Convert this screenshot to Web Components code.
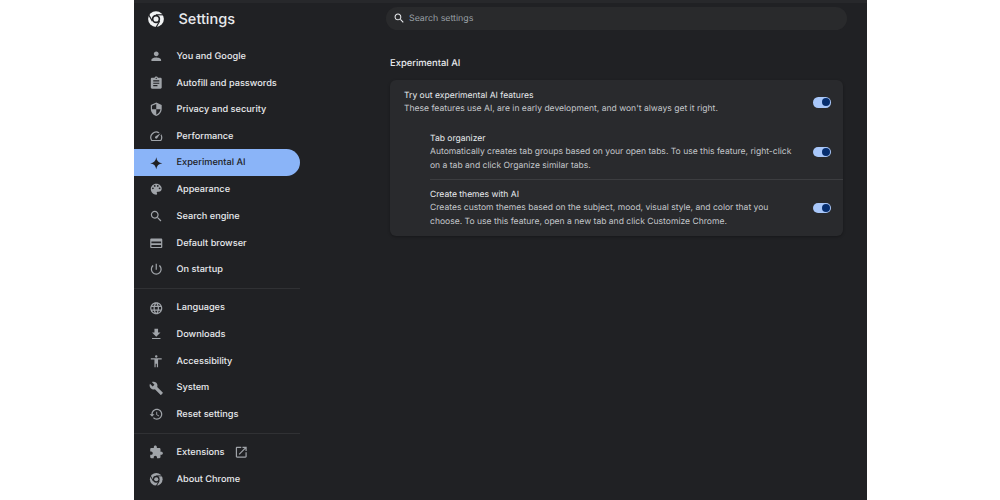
<!DOCTYPE html>
<html lang="en">
<head>
<meta charset="utf-8">
<title>Settings - Experimental AI</title>
<style>
    html, body {
        margin: 0;
        height: 100%;
        background: #fff;
        font-family: Inter, "Liberation Sans", sans-serif;
        text-rendering: geometricPrecision;
    }
</style>
</head>
<body>
<settings-app>
    <settings-sidebar slot="side">
        <nav-item icon="person">You and Google</nav-item>
        <nav-item icon="assignment">Autofill and passwords</nav-item>
        <nav-item icon="shield">Privacy and security</nav-item>
        <nav-item icon="speed">Performance</nav-item>
        <nav-item icon="spark" active>Experimental AI</nav-item>
        <nav-item icon="palette">Appearance</nav-item>
        <nav-item icon="search">Search engine</nav-item>
        <nav-item icon="browser">Default browser</nav-item>
        <nav-item icon="power">On startup</nav-item>
        <nav-rule></nav-rule>
        <nav-item icon="globe">Languages</nav-item>
        <nav-item icon="download">Downloads</nav-item>
        <nav-item icon="accessibility">Accessibility</nav-item>
        <nav-item icon="build">System</nav-item>
        <nav-item icon="restore">Reset settings</nav-item>
        <nav-rule></nav-rule>
        <nav-item icon="extension" external>Extensions</nav-item>
        <nav-item icon="chrome">About Chrome</nav-item>
    </settings-sidebar>
    <search-box slot="search">Search settings</search-box>
    <settings-section slot="main" heading="Experimental AI">
        <setting-row heading="Try out experimental AI features">These features use AI, are in early development, and won't always get it right.</setting-row>
        <setting-row sub heading="Tab organizer">Automatically creates tab groups based on your open tabs. To use this feature, right-click on a tab and click Organize similar tabs.</setting-row>
        <setting-row sub ruled heading="Create themes with AI">Creates custom themes based on the subject, mood, visual style, and color that you choose. To use this feature, open a new tab and click Customize Chrome.</setting-row>
    </settings-section>
</settings-app>

<script>
const ICONS = {
    person: "M12 12c2.21 0 4-1.79 4-4s-1.79-4-4-4-4 1.79-4 4 1.79 4 4 4zm0 2c-2.67 0-8 1.34-8 4v2h16v-2c0-2.66-5.33-4-8-4z",
    assignment: "M19 3h-4.18C14.4 1.84 13.3 1 12 1c-1.3 0-2.4.84-2.82 2H5c-1.1 0-2 .9-2 2v14c0 1.1.9 2 2 2h14c1.1 0 2-.9 2-2V5c0-1.1-.9-2-2-2zm-7 0c.55 0 1 .45 1 1s-.45 1-1 1-1-.45-1-1 .45-1 1-1zm2 14H7v-2h7v2zm3-4H7v-2h10v2zm0-4H7V7h10v2z",
    shield: "M12 1L3 5v6c0 5.55 3.84 10.74 9 12 5.16-1.26 9-6.45 9-12V5l-9-4zm0 10.99h7c-.53 4.12-3.28 7.79-7 8.94V12H5V6.3l7-3.11v8.8z",
    speed: "M20.38 8.57l-1.23 1.85a8 8 0 0 1-.22 7.58H5.07A8 8 0 0 1 15.58 6.85l1.85-1.23A10 10 0 0 0 3.35 19a2 2 0 0 0 1.72 1h13.85a2 2 0 0 0 1.74-1 10 10 0 0 0-.27-10.44zm-9.79 6.84a2 2 0 0 0 2.83 0l5.66-8.49-8.49 5.66a2 2 0 0 0 0 2.83z",
    spark: "M12 2C12.8 8 16 11.2 22 12C16 12.8 12.8 16 12 22C11.2 16 8 12.8 2 12C8 11.2 11.2 8 12 2z",
    palette: "M12 3c-4.97 0-9 4.03-9 9s4.03 9 9 9c.83 0 1.5-.67 1.5-1.5 0-.39-.15-.74-.39-1.01-.23-.26-.38-.61-.38-.99 0-.83.67-1.5 1.5-1.5H16c2.76 0 5-2.24 5-5 0-4.42-4.03-8-9-8zm-5.5 9c-.83 0-1.5-.67-1.5-1.5S5.67 9 6.5 9 8 9.67 8 10.5 7.33 12 6.5 12zm3-4C8.67 8 8 7.33 8 6.5S8.67 5 9.5 5s1.5.67 1.5 1.5S10.33 8 9.5 8zm5 0c-.83 0-1.5-.67-1.5-1.5S13.67 5 14.5 5s1.5.67 1.5 1.5S15.33 8 14.5 8zm3 4c-.83 0-1.5-.67-1.5-1.5S16.67 9 17.5 9s1.5.67 1.5 1.5-.67 1.5-1.5 1.5z",
    search: "M15.5 14h-.79l-.28-.27C15.41 12.59 16 11.11 16 9.5 16 5.91 13.09 3 9.5 3S3 5.91 3 9.5 5.91 16 9.5 16c1.61 0 3.09-.59 4.23-1.57l.27.28v.79l5 4.99L20.49 19l-4.99-5zm-6 0C7.01 14 5 11.99 5 9.5S7.01 5 9.5 5 14 7.01 14 9.5 11.99 14 9.5 14z",
    browser: "M20 4H4c-1.1 0-2 .9-2 2v12c0 1.1.9 2 2 2h16c1.1 0 2-.9 2-2V6c0-1.1-.9-2-2-2zM4 9h16v3H4zM4 15h16v3H4z",
    power: "M13 3h-2v10h2V3zm4.83 2.17l-1.42 1.42C17.99 7.86 19 9.81 19 12c0 3.87-3.13 7-7 7s-7-3.13-7-7c0-2.19 1.01-4.14 2.58-5.42L6.17 5.17C4.23 6.82 3 9.26 3 12c0 4.97 4.03 9 9 9s9-4.03 9-9c0-2.74-1.23-5.18-3.17-6.83z",
    globe: "M11.99 2C6.47 2 2 6.48 2 12s4.47 10 9.99 10C17.52 22 22 17.52 22 12S17.52 2 11.99 2zm6.93 6h-2.95c-.32-1.25-.78-2.45-1.38-3.56 1.84.63 3.37 1.91 4.33 3.56zM12 4.04c.83 1.2 1.48 2.53 1.91 3.96h-3.82c.43-1.43 1.08-2.76 1.91-3.96zM4.26 14C4.1 13.36 4 12.69 4 12s.1-1.36.26-2h3.38c-.08.66-.14 1.32-.14 2 0 .68.06 1.34.14 2H4.26zm.82 2h2.95c.32 1.25.78 2.45 1.38 3.56-1.84-.63-3.37-1.9-4.33-3.56zm2.95-8H5.08c.96-1.66 2.49-2.93 4.33-3.56C8.81 5.55 8.35 6.75 8.03 8zM12 19.96c-.83-1.2-1.48-2.53-1.91-3.96h3.82c-.43 1.43-1.08 2.76-1.91 3.96zM14.34 14H9.66c-.09-.66-.16-1.32-.16-2 0-.68.07-1.35.16-2h4.68c.09.65.16 1.32.16 2 0 .68-.07 1.34-.16 2zm.25 5.56c.6-1.11 1.06-2.31 1.38-3.56h2.95c-.96 1.65-2.49 2.93-4.33 3.56zM16.36 14c.08-.66.14-1.32.14-2 0-.68-.06-1.34-.14-2h3.38c.16.64.26 1.31.26 2s-.1 1.36-.26 2h-3.38z",
    download: "M19 9h-4V3H9v6H5l7 7 7-7zM5 18v2h14v-2H5z",
    accessibility: "M12 2c1.1 0 2 .9 2 2s-.9 2-2 2-2-.9-2-2 .9-2 2-2zm9 7h-6v13h-2v-6h-2v6H9V9H3V7h18v2z",
    build: "M22.7 19l-9.1-9.1c.9-2.3.4-5-1.5-6.9-2-2-5-2.4-7.4-1.3L9 6 6 9 1.6 4.7C.4 7.1.9 10.1 2.9 12.1c1.9 1.9 4.6 2.4 6.9 1.5l9.1 9.1c.4.4 1 .4 1.4 0l2.3-2.3c.5-.4.5-1.1.1-1.4z",
    restore: "M13 3c-4.97 0-9 4.03-9 9H1l3.89 3.89.07.14L9 12H6c0-3.87 3.13-7 7-7s7 3.13 7 7-3.13 7-7 7c-1.93 0-3.68-.79-4.94-2.06l-1.42 1.42C8.27 19.99 10.51 21 13 21c4.97 0 9-4.03 9-9s-4.03-9-9-9zm-1 5v5l4.28 2.54.72-1.21-3.5-2.08V8H12z",
    extension: "M20.5 11H19V7c0-1.1-.9-2-2-2h-4V3.5C13 2.12 11.88 1 10.5 1S8 2.12 8 3.5V5H4c-1.1 0-1.99.9-1.99 2v3.8H3.5c1.49 0 2.7 1.21 2.7 2.7s-1.21 2.7-2.7 2.7H2V20c0 1.1.9 2 2 2h3.8v-1.5c0-1.49 1.21-2.7 2.7-2.7 1.49 0 2.7 1.21 2.7 2.7V22H17c1.1 0 2-.9 2-2v-4h1.5c1.38 0 2.5-1.12 2.5-2.5S21.88 11 20.5 11z",
    external: "M19 19H5V5h7V3H5c-1.11 0-2 .9-2 2v14c0 1.1.89 2 2 2h14c1.1 0 2-.9 2-2v-7h-2v7zM14 3v2h3.59l-9.83 9.83 1.41 1.41L19 6.41V10h2V3h-7z",
};

// chrome mark is shapes, not a single path
function chromeMark(color, hole) {
    const blade = `<path d="M12 6.4H23" stroke="${hole}" stroke-width="1.5" fill="none"/>`;
    return `<svg viewBox="0 0 24 24" width="100%" height="100%">
        <circle cx="12" cy="12" r="10.5" fill="${color}"/>
        <circle cx="12" cy="12" r="5.6" fill="${hole}"/>
        <circle cx="12" cy="12" r="3.4" fill="${color}"/>
        ${blade}
        <g transform="rotate(120 12 12)">${blade}</g>
        <g transform="rotate(240 12 12)">${blade}</g>
    </svg>`;
}

function iconSvg(name) {
    if (name === "chrome") return chromeMark("currentColor", "#202124");
    return `<svg viewBox="0 0 24 24" width="100%" height="100%"><path fill="currentColor" fill-rule="evenodd" d="${ICONS[name]}"/></svg>`;
}

class SettingsApp extends HTMLElement {
    constructor() {
        super();
        this.attachShadow({ mode: "open" });
        this.shadowRoot.innerHTML = `
            <style>
                :host {
                    display: block;
                    width: 733px;
                    height: 500px;
                    margin-left: 134px;
                    background: #202124;
                    box-shadow: inset 0 3px 0 #27282b;
                    overflow: hidden;
                }
                .layout {
                    display: grid;
                    grid-template-columns: 166px 1fr;
                    height: 100%;
                }
                .top {
                    height: 37px;
                    padding-top: 7px;
                    padding-left: 86px;
                    box-sizing: border-box;
                }
                .main {
                    padding-left: 90px;
                    padding-right: 24px;
                }
            </style>
            <div class="layout">
                <slot name="side"></slot>
                <div>
                    <div class="top"><slot name="search"></slot></div>
                    <div class="main"><slot name="main"></slot></div>
                </div>
            </div>
        `;
    }
}

class SettingsSidebar extends HTMLElement {
    constructor() {
        super();
        this.attachShadow({ mode: "open" });
        this.shadowRoot.innerHTML = `
            <style>
                :host {
                    display: block;
                    min-width: 0;
                }
                header {
                    display: flex;
                    align-items: center;
                    gap: 13.5px;
                    height: 43.1px;
                    padding-left: 13px;
                    box-sizing: border-box;
                    color: #e8eaed;
                    font-size: 14.5px;
                    font-weight: 500;
                }
                .logo {
                    width: 18px;
                    height: 18px;
                    color: #f1f3f4;
                    margin-top: -5px;
                }
                .title {
                    margin-top: -5px;
                }
            </style>
            <header>
                <span class="logo">${chromeMark("currentColor", "#202124")}</span>
                <span class="title">Settings</span>
            </header>
            <slot></slot>
        `;
    }
}

class NavItem extends HTMLElement {
    constructor() {
        super();
        this.attachShadow({ mode: "open" });
        const external = this.hasAttribute("external")
            ? `<span class="ext">${iconSvg("external")}</span>`
            : "";
        this.shadowRoot.innerHTML = `
            <style>
                :host {
                    display: flex;
                    align-items: center;
                    height: 26.67px;
                    padding-left: 15px;
                    box-sizing: border-box;
                    border-radius: 0 13.5px 13.5px 0;
                    color: #e8eaed;
                    font-size: 9.2px;
                    font-weight: 500;
                    white-space: nowrap;
                }
                :host([active]) {
                    height: 27.07px;
                    margin-top: -0.4px;
                    background: #8ab4f8;
                    color: #202124;
                }
                .icon {
                    width: 14.5px;
                    height: 14.5px;
                    margin-right: 13px;
                    color: #a0a4a9;
                    flex: none;
                }
                :host([active]) .icon {
                    color: #202124;
                }
                .ext {
                    width: 14.5px;
                    height: 14.5px;
                    margin-left: 9.5px;
                    color: #a0a4a9;
                }
            </style>
            <span class="icon">${iconSvg(this.getAttribute("icon"))}</span>
            <slot></slot>
            ${external}
        `;
    }
}

class NavRule extends HTMLElement {
    constructor() {
        super();
        this.attachShadow({ mode: "open" });
        this.shadowRoot.innerHTML = `
            <style>
                :host {
                    display: block;
                    height: 1px;
                    margin: 5px 0 5.5px;
                    background: #303134;
                }
            </style>
        `;
    }
}

class SearchBox extends HTMLElement {
    constructor() {
        super();
        this.attachShadow({ mode: "open" });
        this.shadowRoot.innerHTML = `
            <style>
                :host {
                    display: flex;
                    align-items: center;
                    width: 461px;
                    height: 23px;
                    padding-left: 7px;
                    box-sizing: border-box;
                    border-radius: 12px;
                    background: #292a2c;
                    color: #9aa0a6;
                    font-size: 8.8px;
                }
                .icon {
                    width: 12.5px;
                    height: 12.5px;
                    margin-right: 3.5px;
                    color: #e8eaed;
                }
            </style>
            <span class="icon">${iconSvg("search")}</span>
            <slot></slot>
        `;
    }
}

class SettingsSection extends HTMLElement {
    constructor() {
        super();
        this.attachShadow({ mode: "open" });
        this.shadowRoot.innerHTML = `
            <style>
                :host {
                    display: block;
                }
                h2 {
                    margin: 0;
                    height: 43px;
                    padding-top: 19.5px;
                    box-sizing: border-box;
                    color: #e8eaed;
                    font-size: 9.4px;
                    font-weight: 500;
                    line-height: 13px;
                }
                .card {
                    border-radius: 6px;
                    background: #292a2d;
                    box-shadow: 0 1px 3px rgba(0, 0, 0, 0.3);
                }
            </style>
            <h2>${this.getAttribute("heading")}</h2>
            <div class="card"><slot></slot></div>
        `;
    }
}

class SettingRow extends HTMLElement {
    constructor() {
        super();
        this.attachShadow({ mode: "open" });
        this.shadowRoot.innerHTML = `
            <style>
                :host {
                    display: block;
                    padding-left: 14px;
                }
                :host([sub]) {
                    padding-left: 40px;
                }
                .row {
                    display: flex;
                    align-items: center;
                    padding: 9.8px 12.5px 8px 0;
                }
                :host([sub]) .row {
                    padding-top: 8.2px;
                    padding-bottom: 6px;
                }
                :host([ruled]) .row {
                    padding-top: 8.8px;
                    padding-bottom: 7px;
                    border-top: 1px solid #3c3d40;
                }
                .text {
                    flex: 1;
                    min-width: 0;
                    padding-right: 16px;
                    font-size: 8.55px;
                    line-height: 13.4px;
                }
                .heading {
                    color: #e8eaed;
                }
                .body {
                    color: #c4c7cb;
                }
                toggle-switch {
                    margin-top: -1.5px;
                }
            </style>
            <div class="row">
                <div class="text">
                    <div class="heading">${this.getAttribute("heading")}</div>
                    <div class="body"><slot></slot></div>
                </div>
                <toggle-switch></toggle-switch>
            </div>
        `;
    }
}

class ToggleSwitch extends HTMLElement {
    constructor() {
        super();
        this.attachShadow({ mode: "open" });
        this.shadowRoot.innerHTML = `
            <style>
                :host {
                    display: flex;
                    justify-content: flex-end;
                    align-items: center;
                    flex: none;
                    width: 18px;
                    height: 10.5px;
                    padding: 0 1px;
                    box-sizing: border-box;
                    border-radius: 5.25px;
                    background: #a8c7fa;
                }
                .knob {
                    width: 8px;
                    height: 8px;
                    border-radius: 50%;
                    background: #062e6f;
                }
            </style>
            <span class="knob"></span>
        `;
    }
}

customElements.define("settings-app", SettingsApp);
customElements.define("settings-sidebar", SettingsSidebar);
customElements.define("nav-item", NavItem);
customElements.define("nav-rule", NavRule);
customElements.define("search-box", SearchBox);
customElements.define("settings-section", SettingsSection);
customElements.define("setting-row", SettingRow);
customElements.define("toggle-switch", ToggleSwitch);
</script>
</body>
</html>
